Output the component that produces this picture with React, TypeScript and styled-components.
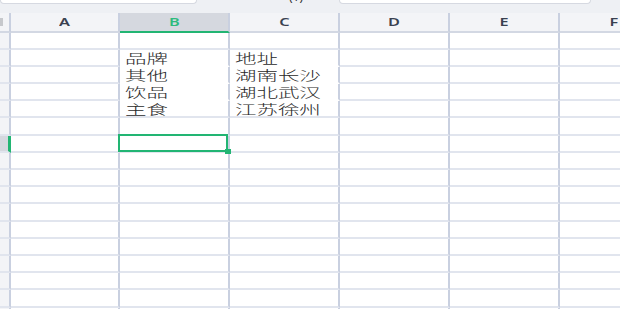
import styled, { createGlobalStyle, css } from 'styled-components';

const GlobalStyle = createGlobalStyle`
    html, body {
        margin: 0;
        padding: 0;
        background: #ffffff;
        overflow: hidden;
    }
`;

const GREEN = '#22b573';
const COL_LINE = '#c9d0e0';
const ROW_LINE = '#e1e5ee';

const Page = styled.div`
    display: flex;
    flex-direction: column;
    width: 620px;
    height: 309px;
    overflow: hidden;
`;

const TabStrip = styled.div`
    flex-shrink: 0;
    display: flex;
    align-items: flex-start;
    height: 12.5px;
    background: #eef0f4;
`;

const Tab = styled.div<{ $width: number; $gap?: number }>`
    box-sizing: border-box;
    width: ${({ $width }) => $width}px;
    height: 4px;
    margin-left: ${({ $gap }) => $gap ?? 0}px;
    background: #ffffff;
    border: 1px solid #d6d9e1;
    border-top: none;
    border-radius: 0 0 4px 4px;
`;

const TabPeek = styled.div`
    display: flex;
    align-items: flex-end;
    height: 3px;
    margin-left: 92px;
    overflow: hidden;
    font-family: 'Noto Sans', sans-serif;
    font-size: 12px;
    line-height: 12px;
    color: #333;
`;

const Sheet = styled.div`
    flex-shrink: 0;
    display: grid;
    grid-template-columns: 11px 109px repeat(5, 110px);
    grid-template-rows: 20px;
    grid-auto-rows: 17.2px;
`;

const Corner = styled.div`
    box-sizing: border-box;
    display: flex;
    align-items: center;
    background: #f3f4f7;
    border-right: 2px solid ${COL_LINE};
    border-bottom: 2px solid #d3d8e3;
`;

const CornerMark = styled.div`
    width: 3px;
    height: 8px;
    background: #c6c8cc;
`;

const ColHead = styled.div<{ $active?: boolean }>`
    box-sizing: border-box;
    display: flex;
    align-items: center;
    justify-content: center;
    background: ${({ $active }) => ($active ? '#d5d8df' : '#f3f4f7')};
    border-right: 2px solid ${COL_LINE};
    border-bottom: 2px solid ${({ $active }) => ($active ? GREEN : '#d3d8e3')};
    font-family: 'Noto Sans', sans-serif;
    font-size: 10.5px;
    font-weight: 600;
    color: ${({ $active }) => ($active ? '#2dbb7d' : '#3a4150')};
`;

const HeadLetter = styled.span`
    display: inline-block;
    transform: scaleX(1.55);
`;

const RowHead = styled.div<{ $active?: boolean }>`
    box-sizing: border-box;
    background: ${({ $active }) => ($active ? '#d5d8df' : '#f3f4f7')};
    border-right: ${({ $active }) => ($active ? `3px solid ${GREEN}` : `2px solid ${COL_LINE}`)};
    border-bottom: 2px solid ${ROW_LINE};
`;

const Cell = styled.div<{ $open?: boolean; $active?: boolean }>`
    box-sizing: border-box;
    position: relative;
    display: flex;
    align-items: flex-end;
    padding: 0 0 1px 5px;
    background: #ffffff;
    border-right: 2px solid ${COL_LINE};
    border-bottom: 2px solid ${({ $open }) => ($open ? '#ffffff' : ROW_LINE)};

    ${({ $active }) =>
        $active &&
        css`
            &::before {
                content: '';
                position: absolute;
                top: -1.5px;
                left: -2.5px;
                right: 0;
                bottom: -1px;
                border: 2.5px solid ${GREEN};
                z-index: 2;
            }

            &::after {
                content: '';
                position: absolute;
                right: -3px;
                bottom: -3px;
                width: 6px;
                height: 5px;
                background: ${GREEN};
                z-index: 3;
            }
        `}
`;

const CellText = styled.span`
    display: inline-block;
    transform: scaleX(1.65);
    transform-origin: left bottom;
    white-space: nowrap;
    font-family: 'Noto Sans CJK SC', 'Noto Sans', sans-serif;
    font-size: 13px;
    font-weight: 300;
    line-height: 13px;
    color: #2a2a2a;
`;

const columns = ['A', 'B', 'C', 'D', 'E', 'F'];
const rowCount = 17;
const activeCol = 'B';
const activeRow = 7;

const values: Record<string, string> = {
    B2: '品牌',
    C2: '地址',
    B3: '其他',
    C3: '湖南长沙',
    B4: '饮品',
    C4: '湖北武汉',
    B5: '主食',
    C5: '江苏徐州',
};

export default function App() {
    const rows = Array.from({ length: rowCount }, (_, i) => i + 1);

    return (
        <>
            <GlobalStyle />
            <Page>
                <TabStrip>
                    <Tab $width={197} />
                    <TabPeek>(1)</TabPeek>
                    <Tab $width={252} $gap={36} />
                </TabStrip>
                <Sheet>
                    <Corner>
                        <CornerMark />
                    </Corner>
                    {columns.map((col) => (
                        <ColHead key={col} $active={col === activeCol}>
                            <HeadLetter>{col}</HeadLetter>
                        </ColHead>
                    ))}
                    {rows.map((row) => [
                        <RowHead key={`h${row}`} $active={row === activeRow} />,
                        ...columns.map((col) => {
                            const key = `${col}${row}`;
                            const text = values[key];
                            return (
                                <Cell
                                    key={key}
                                    $open={!!text && row < 5}
                                    $active={col === activeCol && row === activeRow}
                                >
                                    {text && <CellText>{text}</CellText>}
                                </Cell>
                            );
                        }),
                    ])}
                </Sheet>
            </Page>
        </>
    );
}
